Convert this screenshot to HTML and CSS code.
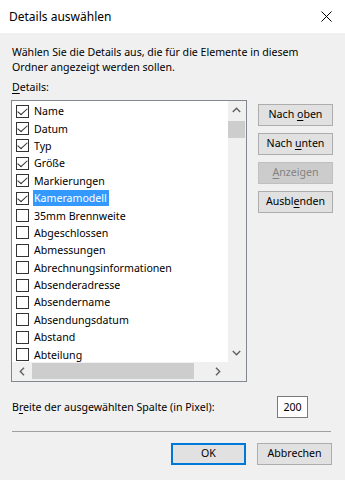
FILE: index.html
```html
<!DOCTYPE html>
<html lang="de">

<head>
    <meta charset="UTF-8">
    <meta name="viewport" content="width=device-width, initial-scale=1.0">
    <title>Details auswählen</title>
    <link rel="stylesheet" href="styles.css">
</head>

<body>
    <div class="dialog">
        <div class="titlebar">
            <span class="title">Details auswählen</span>
            <svg class="close" width="11" height="11" viewBox="0 0 11 11">
                <path d="M0.5 0.5 L10.5 10.5 M10.5 0.5 L0.5 10.5" stroke="#000" stroke-width="1" fill="none" />
            </svg>
        </div>

        <div class="content">
            <p class="intro">Wählen Sie die Details aus, die für die Elemente in diesem<br>Ordner angezeigt werden sollen.</p>
            <div class="label"><u>D</u>etails:</div>

            <div class="main">
                <div class="listbox">
                    <div class="list-area">
                        <ul class="items">
                            <li class="item"><span class="check on"></span><span class="name">Name</span></li>
                            <li class="item"><span class="check on"></span><span class="name">Datum</span></li>
                            <li class="item"><span class="check on"></span><span class="name">Typ</span></li>
                            <li class="item"><span class="check on"></span><span class="name">Größe</span></li>
                            <li class="item"><span class="check on"></span><span class="name">Markierungen</span></li>
                            <li class="item"><span class="check on"></span><span class="name selected">Kameramodell</span></li>
                            <li class="item"><span class="check"></span><span class="name">35mm Brennweite</span></li>
                            <li class="item"><span class="check"></span><span class="name">Abgeschlossen</span></li>
                            <li class="item"><span class="check"></span><span class="name">Abmessungen</span></li>
                            <li class="item"><span class="check"></span><span class="name">Abrechnungsinformationen</span></li>
                            <li class="item"><span class="check"></span><span class="name">Absenderadresse</span></li>
                            <li class="item"><span class="check"></span><span class="name">Absendername</span></li>
                            <li class="item"><span class="check"></span><span class="name">Absendungsdatum</span></li>
                            <li class="item"><span class="check"></span><span class="name">Abstand</span></li>
                            <li class="item"><span class="check"></span><span class="name">Abteilung</span></li>
                        </ul>
                        <div class="vscroll">
                            <div class="arrow">
                                <svg width="9" height="6" viewBox="0 0 9 6"><path d="M0.8 5 L4.5 1.3 L8.2 5" stroke="#606060" stroke-width="1.4" fill="none" /></svg>
                            </div>
                            <div class="vthumb"></div>
                            <div class="vtrack"></div>
                            <div class="arrow">
                                <svg width="9" height="6" viewBox="0 0 9 6"><path d="M0.8 1 L4.5 4.7 L8.2 1" stroke="#606060" stroke-width="1.4" fill="none" /></svg>
                            </div>
                        </div>
                    </div>
                    <div class="hscroll-row">
                        <div class="hscroll">
                            <div class="harrow">
                                <svg width="6" height="9" viewBox="0 0 6 9"><path d="M5 0.8 L1.3 4.5 L5 8.2" stroke="#606060" stroke-width="1.4" fill="none" /></svg>
                            </div>
                            <div class="hthumb"></div>
                            <div class="htrack"></div>
                            <div class="harrow">
                                <svg width="6" height="9" viewBox="0 0 6 9"><path d="M1 0.8 L4.7 4.5 L1 8.2" stroke="#606060" stroke-width="1.4" fill="none" /></svg>
                            </div>
                        </div>
                        <div class="corner"></div>
                    </div>
                </div>

                <div class="side-buttons">
                    <div class="btn"><span>Nach <u>o</u>ben</span></div>
                    <div class="btn"><span>Nach <u>u</u>nten</span></div>
                    <div class="btn disabled"><span><u>A</u>nzeigen</span></div>
                    <div class="btn"><span>Ausbl<u>e</u>nden</span></div>
                </div>
            </div>

            <div class="width-row">
                <span>B<u>r</u>eite der ausgewählten Spalte (in Pixel):</span>
                <div class="numbox">200</div>
            </div>

            <div class="separator"></div>

            <div class="footer">
                <div class="btn default"><span>OK</span></div>
                <div class="btn"><span>Abbrechen</span></div>
            </div>
        </div>
    </div>
</body>

</html>
```

FILE: styles.css
```css
* {
    padding: 0;
    margin: 0;
    box-sizing: border-box;
}

html,
body {
    width: 100%;
    height: 100%;
    overflow: hidden;
    background-color: #f0f0f0;
}

body {
    font-family: "Noto Sans", "Open Sans", sans-serif;
    font-size: 10.6px;
    color: #000;
}

u {
    text-decoration-thickness: 1px;
    text-underline-offset: 1.5px;
}

.dialog {
    width: 345px;
    height: 480px;
    display: flex;
    flex-direction: column;
}

.titlebar {
    height: 33px;
    background-color: #fff;
    display: flex;
    align-items: center;
    justify-content: space-between;
    padding: 0 13px 0 9px;
}

.title {
    font-size: 12px;
}

.close {
    display: block;
}

.content {
    padding: 12px 12px 0 11px;
    display: flex;
    flex-direction: column;
}

.intro {
    line-height: 15px;
    padding-left: 1px;
}

.label {
    line-height: 15px;
    margin-top: 5px;
    padding-left: 1px;
}

.main {
    display: flex;
    margin-top: 5px;
}

/* listbox */
.listbox {
    width: 236px;
    height: 282px;
    border: 1px solid #828790;
    background-color: #fff;
    display: flex;
    flex-direction: column;
}

.list-area {
    display: flex;
    height: 261px;
}

.items {
    list-style: none;
    width: 216px;
    padding-top: 1.5px;
    overflow: hidden;
}

.item {
    height: 17.4px;
    display: flex;
    align-items: center;
    padding-left: 4px;
    white-space: nowrap;
}

.check {
    width: 13px;
    height: 13px;
    border: 1px solid #333;
    background-color: #fff;
    margin-right: 4px;
    flex-shrink: 0;
    position: relative;
}

.check.on::after {
    content: "";
    position: absolute;
    left: 3px;
    top: 0px;
    width: 4px;
    height: 8px;
    border-right: 1px solid #333;
    border-bottom: 1px solid #333;
    transform: rotate(40deg) skewX(-8deg);
}

.name {
    line-height: 16px;
    padding: 0 2px 0 1px;
}

.name.selected {
    background-color: #3399ff;
    color: #fff;
}

/* scrollbars */
.vscroll {
    width: 18px;
    background-color: #f0f0f0;
    display: flex;
    flex-direction: column;
    padding: 0 1px 0 0;
}

.arrow {
    height: 18px;
    display: flex;
    align-items: center;
    justify-content: center;
}

.vthumb {
    height: 17px;
    margin-top: 2px;
    background-color: #cdcdcd;
}

.vtrack {
    flex: 1;
}

.hscroll-row {
    display: flex;
    flex: 1;
}

.hscroll {
    width: 216px;
    background-color: #f0f0f0;
    display: flex;
    padding: 1px 0 2px 0;
}

.harrow {
    width: 20px;
    display: flex;
    align-items: center;
    justify-content: center;
}

.hthumb {
    width: 162px;
    background-color: #cdcdcd;
}

.htrack {
    flex: 1;
}

.corner {
    flex: 1;
    background-color: #f0f0f0;
}

/* buttons */
.side-buttons {
    margin-left: 11px;
    padding-top: 4px;
    display: flex;
    flex-direction: column;
    gap: 7px;
}

.btn {
    width: 75px;
    height: 22px;
    border: 1px solid #adadad;
    background-color: #e1e1e1;
    display: flex;
    align-items: center;
    justify-content: center;
    line-height: 1;
    padding-bottom: 1px;
    white-space: nowrap;
}

.btn.disabled {
    background-color: #cccccc;
    border-color: #bfbfbf;
    color: #838383;
}

.btn.default {
    border: 2px solid #0078d7;
}

.width-row {
    display: flex;
    align-items: center;
    justify-content: space-between;
    margin-top: 14px;
    padding-left: 1px;
    padding-right: 25px;
}

.numbox {
    width: 31px;
    height: 22px;
    border: 1px solid #7a7a7a;
    background-color: #fff;
    display: flex;
    align-items: center;
    justify-content: center;
    padding-bottom: 1px;
}

.separator {
    height: 1px;
    background-color: #a0a0a0;
    margin: 13px 2px 0 1px;
}

.footer {
    display: flex;
    justify-content: flex-end;
    gap: 11px;
    margin-top: 11px;
    padding-right: 1px;
}
```
